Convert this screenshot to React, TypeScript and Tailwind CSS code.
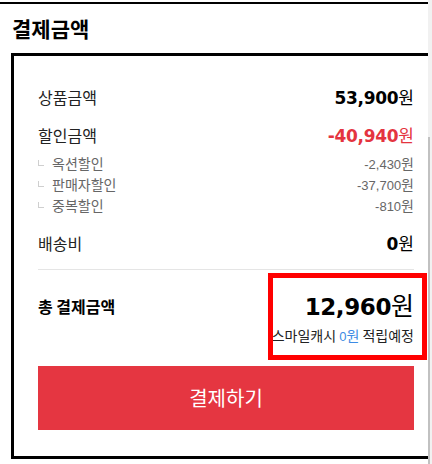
import React from "react";

const Sub = ({ label, value }: { label: string; value: string }) => (
  <div className="flex h-[21px] items-center justify-between text-[14px] text-[#666]">
    <div className="flex items-center">
      <span className="mb-[2px] block h-[6px] w-[6px] border-b border-l border-[#cfcfcf]" />
      <span className="ml-[8px] leading-[21px]">{label}</span>
    </div>
    <span className="leading-[21px]">
      <span className="font-['Liberation_Sans',sans-serif] text-[13px]">{value}</span>원
    </span>
  </div>
);

export default function App() {
  return (
    <div className="flex h-[464px] w-[432px] overflow-hidden bg-white font-['Noto_Sans_CJK_KR',sans-serif] text-[#111]">
      <div className="w-[428px] shrink-0 overflow-hidden pt-[2px]">
        <div className="w-[441px] border-t-2 border-black">
          <h2 className="h-[49px] pl-[12px] pt-[12px] text-[21px] font-bold leading-[24px] text-black">
            결제금액
          </h2>
          <div className="ml-[11px] w-[430px] border-[3px] border-black px-[24px] pb-[26px] pt-[29px]">
            <div className="flex h-[24px] items-center justify-between">
              <span className="text-[16px] leading-[24px] text-[#222]">상품금액</span>
              <span className="text-[17px] leading-[24px] text-black">
                <span className="font-['DejaVu_Sans',sans-serif] font-bold tracking-[-0.3px]">53,900</span>원
              </span>
            </div>
            <div className="mt-[14px] flex h-[24px] items-center justify-between">
              <span className="text-[16px] leading-[24px] text-[#222]">할인금액</span>
              <span className="text-[17px] leading-[24px] text-[#e4343f]">
                <span className="font-['DejaVu_Sans',sans-serif] font-bold tracking-[-0.3px]">-40,940</span>원
              </span>
            </div>
            <div className="mt-[6px]">
              <Sub label="옥션할인" value="-2,430" />
              <Sub label="판매자할인" value="-37,700" />
              <Sub label="중복할인" value="-810" />
            </div>
            <div className="mt-[15px] flex h-[24px] items-center justify-between">
              <span className="text-[16px] leading-[24px] text-[#222]">배송비</span>
              <span className="text-[17px] leading-[24px] text-black">
                <span className="font-['DejaVu_Sans',sans-serif] font-bold">0</span>원
              </span>
            </div>
            <div className="mt-[14px] h-px bg-[#e5e5e5]" />
            <div className="relative flex justify-between pt-[20px]">
              <span className="mt-[4px] h-[24px] text-[16px] font-bold leading-[24px] text-black">총 결제금액</span>
              <div className="flex flex-col items-end">
                <span className="h-[28px] text-[25px] leading-[28px] text-black">
                  <span className="font-['DejaVu_Sans',sans-serif] text-[23px] font-bold tracking-[-0.4px]">12,960</span>원
                </span>
                <span className="mt-[8px] h-[18px] whitespace-nowrap text-[14px] leading-[18px] text-[#222]">
                  스마일캐시 <span className="text-[#3d8be4]"><span className="font-['Liberation_Sans',sans-serif] text-[13px]">0</span>원</span> 적립예정
                </span>
              </div>
              <div className="pointer-events-none absolute left-[230px] top-[3px] h-[87px] w-[159px] border-[5px] border-[#ff0000]" />
            </div>
            <button className="mt-[22px] flex h-[64px] w-full items-center justify-center bg-[#e53641] text-[20px] leading-[24px] text-white">
              결제하기
            </button>
          </div>
        </div>
      </div>
      <div className="flex w-[4px] shrink-0 flex-col bg-[#f1f1f1]">
        <div className="h-[137px]" />
        <div className="flex-1 border-l-2 border-[#c1c1c1]" />
      </div>
    </div>
  );
}
